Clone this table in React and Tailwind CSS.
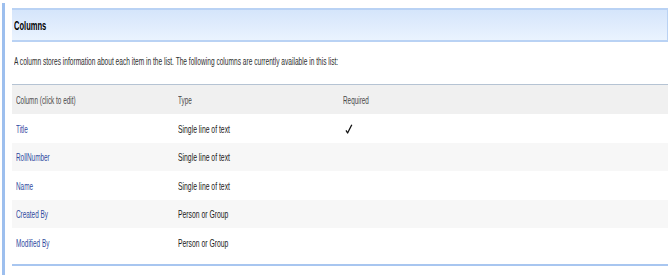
const rows = [
  { name: 'Title', type: 'Single line of text', required: true },
  { name: 'RollNumber', type: 'Single line of text' },
  { name: 'Name', type: 'Single line of text' },
  { name: 'Created By', type: 'Person or Group' },
  { name: 'Modified By', type: 'Person or Group' },
]

// the screenshot is squeezed sideways, so every label is narrowed the same way
function Squeezed({ children, className = '' }) {
  return <span className={`inline-block origin-left whitespace-nowrap ${className}`}>{children}</span>
}

export default function App() {
  return (
    <div className="flex h-[278px] w-[672px] items-start bg-white font-['Liberation_Sans',Arial,sans-serif] text-[11px] leading-[14px]">
      <div className="ml-[2px] mt-[3px] h-[272px] w-[3px] bg-[#9dbfee]" />

      <div className="ml-[7px] mr-[4px] flex-1 pt-[8px]">
        <div className="flex h-[34px] items-center border-y-2 border-r border-[#b9d2f4] bg-gradient-to-b from-[#d5e5fb] to-[#eaf3fe] pl-[2px] pt-[2px]">
          <Squeezed className="scale-x-[0.58] text-[13px] font-bold text-black">Columns</Squeezed>
        </div>

        <div className="flex h-[42px] items-center pb-[4px] pl-[2px] text-[#2e2e2e]">
          <Squeezed className="scale-x-[0.6]">
            A column stores information about each item in the list. The following columns are currently available in this list:
          </Squeezed>
        </div>

        <div className="border-t border-[#b5c3d3]">
          <div className="grid h-[29px] grid-cols-[162px_165px_1fr] items-center bg-[#f0f0f0] pl-[4px] text-[#4a4a4a]">
            <Squeezed className="scale-x-[0.58]">Column (click to edit)</Squeezed>
            <Squeezed className="scale-x-[0.58]">Type</Squeezed>
            <Squeezed className="scale-x-[0.58]">Required</Squeezed>
          </div>

          {rows.map((row, i) => (
            <div
              key={row.name}
              className={`grid grid-cols-[162px_165px_1fr] items-center pl-[4px] ${i % 2 ? 'h-[28px] bg-[#f7f7f7]' : 'h-[29px] bg-white'}`}
            >
              <Squeezed className="scale-x-[0.58] text-[#2f4a9e]">{row.name}</Squeezed>
              <Squeezed className="scale-x-[0.62] text-[#1a1a1a]">{row.type}</Squeezed>
              <span className="pl-[2px]">
                {row.required && (
                  <svg width="8" height="10" viewBox="0 0 8 10" className="block">
                    <path d="M1 6.4 L2.6 9 L6.8 0.8" fill="none" stroke="#111" strokeWidth="1.3" strokeLinejoin="round" />
                  </svg>
                )}
              </span>
            </div>
          ))}
        </div>

        <div className="mt-[7px] h-[2px] bg-[#a8c6f0]" />
      </div>
    </div>
  )
}
